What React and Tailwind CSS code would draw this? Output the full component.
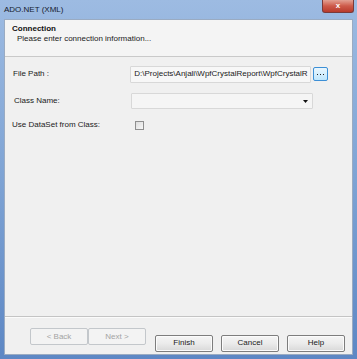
import React from 'react';

const font = { fontFamily: '"Liberation Sans", Arial, sans-serif' };

function WinButton({ children, disabled }) {
  return (
    <button
      disabled={disabled}
      className={
        disabled
          ? 'w-[58px] h-[17px] rounded-[2px] border border-[#c3c7cb] bg-[#f3f3f3] text-[8px] text-[#a3a3a3] leading-none'
          : 'w-[58px] h-[17px] rounded-[2px] border border-[#7d7d7d] bg-gradient-to-b from-[#f5f5f5] via-[#ebebeb] to-[#d8d8d8] text-[8px] text-[#1a1a1a] leading-none shadow-[inset_0_0_0_1px_#fbfbfb]'
      }
    >
      {children}
    </button>
  );
}

export default function App() {
  return (
    <div
      className="w-[357px] h-[359px] flex flex-col bg-gradient-to-b from-[#9dbbe2] via-[#7ea3d4] to-[#5d87c4] overflow-hidden"
      style={font}
    >
      {/* title bar */}
      <div className="h-[19px] flex items-start justify-between pl-[4px] pr-[3px]">
        <span className="text-[8px] text-[#15202e] mt-[6px] leading-none">ADO.NET (XML)</span>
        <div className="w-[32px] h-[13px] rounded-b-[3px] border border-t-0 border-[#7a3a3a] bg-gradient-to-b from-[#e2a093] via-[#cd5a4a] to-[#b83a2c] flex items-center justify-center">
          <span className="text-white font-bold text-[8px] leading-none">x</span>
        </div>
      </div>

      {/* dialog body */}
      <div className="flex-1 mx-[4px] mb-[4px] flex flex-col border border-[#9aabc2] bg-[#f0f0f0]">
        <div className="h-[37px] bg-[#f4f4f4] border-b border-[#c9c9c9] pl-[7px] pt-[4px] text-[8px] leading-[10px]">
          <div className="font-bold text-[#111]">Connection</div>
          <div className="pl-[5px] text-[#1a1a1a]">Please enter connection information...</div>
        </div>

        <div className="flex-1 pl-[7px] pr-[24px] pt-[8px] text-[8px] text-[#1a1a1a]">
          <div className="flex items-center h-[18px]">
            <span className="w-[119px] pl-px">File Path :</span>
            <div className="w-[182px] h-[17px] border border-[#d8d8d8] bg-[#f7f7f7] rounded-[1px] flex items-center pl-[3px] overflow-hidden whitespace-nowrap">
              <span className="block overflow-hidden">D:\Projects\Anjali\WpfCrystalReport\WpfCrystalR</span>
            </div>
            <div className="ml-[2px] w-[15px] h-[14px] rounded-[2px] border border-[#3c8fd6] bg-gradient-to-b from-[#eaf6fd] to-[#bee6fd] flex items-center justify-center">
              <svg width="7" height="3" viewBox="0 0 7 3">
                <rect x="0" y="1" width="1" height="1" fill="#222" />
                <rect x="3" y="1" width="1" height="1" fill="#222" />
                <rect x="6" y="1" width="1" height="1" fill="#222" />
              </svg>
            </div>
          </div>

          <div className="flex items-center h-[16px] mt-[10px]">
            <span className="w-[119px] pl-[2px]">Class Name:</span>
            <div className="w-[182px] h-[16px] border border-[#d8d8d8] bg-[#f5f5f5] rounded-[1px] flex items-center justify-end pr-[4px]">
              <svg width="5" height="3" viewBox="0 0 5 3">
                <path d="M0 0H5L2.5 3Z" fill="#111" />
              </svg>
            </div>
          </div>

          <div className="flex items-center h-[10px] mt-[11px]">
            <span className="w-[123px]">Use DataSet from Class:</span>
            <div className="w-[9px] h-[9px] border border-[#8f8f8f] bg-gradient-to-br from-[#dcdcdc] to-[#f8f8f8]" />
          </div>
        </div>

        <div className="h-[38px] border-t border-[#c4c4c4] shadow-[inset_0_1px_0_#fbfbfb] flex items-start pt-[11px] pl-[25px]">
          <WinButton disabled>&lt; Back</WinButton>
          <WinButton disabled>Next &gt;</WinButton>
          <div className="ml-[9px]">
            <WinButton>Finish</WinButton>
          </div>
          <div className="ml-[8px]">
            <WinButton>Cancel</WinButton>
          </div>
          <div className="ml-[8px]">
            <WinButton>Help</WinButton>
          </div>
        </div>
      </div>
    </div>
  );
}
